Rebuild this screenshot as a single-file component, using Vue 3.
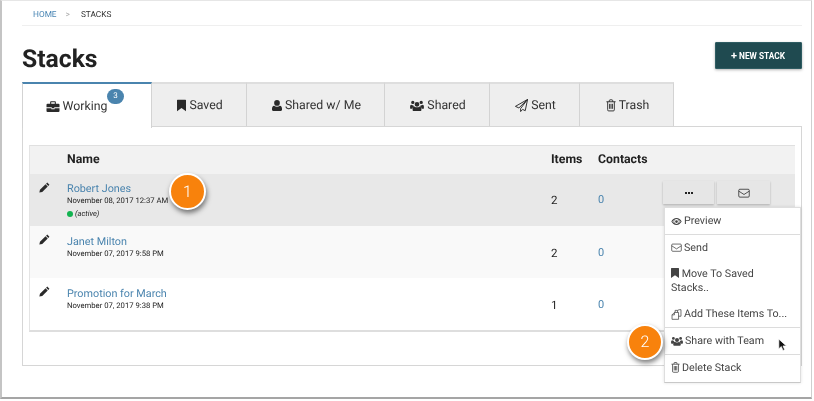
<script setup>
const tabs = [
  { label: 'Working', icon: 'briefcase', w: 130, active: true, vb: '0 0 16 16', iw: 14 },
  { label: 'Saved', icon: 'bookmark', w: 95, vb: '2.800 1.500 10.400 13.500', iw: 9 },
  { label: 'Shared w/ Me', icon: 'user', w: 138, vb: '1.500 1 13 14', iw: 10 },
  { label: 'Shared', icon: 'users', w: 105, vb: '0 1 16 14', iw: 14 },
  { label: 'Sent', icon: 'plane', w: 90, vb: '.5 .5 15 15', iw: 13 },
  { label: 'Trash', icon: 'trash', w: 94, vb: '2 1 12 15', iw: 10 },
]
const rows = [
  { name: 'Robert Jones', date: 'November 08, 2017 12:37 AM', items: 2, cls: 'r1', active: true },
  { name: 'Janet Milton', date: 'November 07, 2017 9:58 PM', items: 2, cls: 'r2' },
  { name: 'Promotion for March', date: 'November 07, 2017 9:38 PM', items: 1, cls: 'r3' },
]
const paths = {
  briefcase: 'M5.500 1.500h5a1 1 0 0 1 1 1V4.500h3.200A1.300 1.300 0 0 1 16 5.800V9H9.500v1.200h-3V9H0V5.800A1.300 1.300 0 0 1 1.300 4.500h3.200V2.500a1 1 0 0 1 1-1zM5.800 2.800v1.700h4.400V2.800zM0 10h6v1.300h4V10h6v3.500a1.300 1.300 0 0 1-1.300 1.300H1.300A1.300 1.300 0 0 1 0 13.500z',
  bookmark: 'M3.500 1.500h9a.7.7 0 0 1 .7.7V15l-5.200-3.800L2.800 15V2.200a.7.7 0 0 1 .7-.7z',
  user: 'M8 1a3.700 3.700 0 1 1 0 7.400A3.700 3.700 0 0 1 8 1zM4.300 8.300c1 .9 2.300 1.400 3.700 1.400s2.700-.5 3.700-1.400c2 .2 2.800 1.900 2.800 4v1.200c0 .9-.7 1.500-1.500 1.500H3c-.8 0-1.500-.6-1.500-1.500v-1.200c0-2.100.8-3.800 2.800-4z',
  users: 'M8 4a2.700 2.700 0 1 1 0 5.400A2.700 2.700 0 0 1 8 4zM3.200 2.600a1.900 1.900 0 1 1 0 3.800 1.900 1.900 0 0 1 0-3.800zM12.800 2.600a1.900 1.900 0 1 1 0 3.800 1.900 1.900 0 0 1 0-3.800zM5 9c.8.700 1.900 1.100 3 1.100S10.200 9.700 11 9c1.500.2 2 1.500 2 3v1c0 .7-.5 1.200-1.200 1.200H4.200C3.500 14.200 3 13.700 3 13v-1c0-1.500.5-2.800 2-3zM.1 9.500c0-1.500.5-2.500 1.500-2.500.4.400 1 .6 1.600.6h.6c0 .9.3 1.600.9 1.900-1.300.4-2 1.300-2.200 2.300H1c-.6 0-.9-.4-.9-1zM15.900 9.500c0-1.500-.5-2.500-1.500-2.500-.4.400-1 .6-1.600.6h-.6c0 .9-.3 1.600-.9 1.900 1.300.4 2 1.300 2.200 2.300H15c.6 0 .9-.4.9-1z',
  pencil: 'M12 .8l3.200 3.200-1.700 1.700-3.200-3.200zM9.500 3.300l3.200 3.200-8 8-4.200.9.900-4.200z',
}
const trashPath = 'M2.500 4h11M4 4v9.500A1.300 1.300 0 0 0 5.300 15h5.400a1.300 1.300 0 0 0 1.300-1.300V4M6 4V2.500a.8.800 0 0 1 .8-.8h2.400a.8.800 0 0 1 .8.8V4M6.300 6.500v6M8 6.500v6M9.700 6.500v6'
</script>

<template>
  <div class="window">
    <nav class="crumbs">
      <span class="crumb-home">HOME</span>
      <span class="crumb-sep">&gt;</span>
      <span class="crumb-cur">STACKS</span>
    </nav>

    <header class="head">
      <h1 class="title">Stacks</h1>
      <button class="new-btn"><span class="plus">+</span> NEW STACK</button>
    </header>

    <div class="tabs">
      <div
        v-for="t in tabs"
        :key="t.label"
        class="tab"
        :class="{ active: t.active }"
        :style="{ width: t.w + 'px' }"
      >
        <svg v-if="t.icon === 'plane'" class="ic" :viewBox="t.vb" :style="{ width: t.iw + 'px' }" fill="none" stroke="currentColor" stroke-width="1.100" stroke-linejoin="round">
          <path d="M15 1L1 9l4 1.800L15 1 7 11.500V15l2.300-2.500 3 1.500z" />
        </svg>
        <svg v-else-if="t.icon === 'trash'" class="ic" :viewBox="t.vb" :style="{ width: t.iw + 'px' }" fill="none" stroke="currentColor" stroke-width="1.100">
          <path :d="trashPath" />
        </svg>
        <svg v-else class="ic" :viewBox="t.vb" :style="{ width: t.iw + 'px' }" fill="currentColor"><path :d="paths[t.icon]" /></svg>
        <span class="tab-label">{{ t.label }}</span>
        <span v-if="t.active" class="badge">3</span>
      </div>
    </div>

    <section class="panel">
      <div class="table">
        <div class="grid thead">
          <span></span>
          <span>Name</span>
          <span>Items</span>
          <span>Contacts</span>
          <span></span>
        </div>
        <div v-for="r in rows" :key="r.name" class="grid row" :class="r.cls">
          <svg class="pencil" viewBox="0 0 16 16" fill="currentColor"><path :d="paths.pencil" /></svg>
          <div class="name-cell">
            <a class="name">{{ r.name }}</a>
            <div class="date">{{ r.date }}</div>
            <div v-if="r.active" class="status"><i class="dot"></i><em>(active)</em></div>
          </div>
          <span class="items">{{ r.items }}</span>
          <a class="contacts">0</a>
          <div v-if="r.active" class="actions">
            <button class="act act-more"><i></i><i></i><i></i></button>
            <button class="act act-mail">
              <svg class="ic-mail" viewBox="0 0 16 16" fill="none" stroke="currentColor" stroke-width="1.100"><rect x="1" y="3" width="14" height="10.500" rx="1.500" /><path d="M1 5.500l7 4.500 7-4.500" /></svg>
            </button>
          </div>
        </div>

        <div class="menu">
          <div class="mi bordered">
            <svg class="mic" viewBox="0 0 16 16" fill="currentColor"><path d="M8 3c3.300 0 6 2.200 7.500 5-1.500 2.800-4.200 5-7.500 5S2 10.800.5 8C2 5.200 4.700 3 8 3zm0 1.500A3.500 3.500 0 1 0 8 11.500 3.500 3.500 0 0 0 8 4.500zM2 8c.6.900 1.400 1.700 2.300 2.300A4.800 4.800 0 0 1 4.300 5.700C3.400 6.300 2.600 7.100 2 8zm9.700-2.300a4.800 4.800 0 0 1 0 4.600c.9-.6 1.700-1.400 2.300-2.300-.6-.9-1.400-1.700-2.300-2.300zM8 6a2 2 0 1 1 0 4 2 2 0 0 1 0-4z" /></svg>
            Preview
          </div>
          <div class="mi lift">
            <svg class="mic" viewBox="0 0 16 16" fill="none" stroke="currentColor" stroke-width="1.100"><rect x="1" y="3" width="14" height="10.500" rx="1.500" /><path d="M1 5.500l7 4.500 7-4.500" /></svg>
            Send
          </div>
          <div class="mi multi">
            <svg class="mic small" viewBox="2.800 1.500 10.400 13.500" preserveAspectRatio="none" fill="currentColor"><path :d="paths.bookmark" /></svg>
            Move To Saved Stacks..
          </div>
          <div class="mi bordered">
            <svg class="mic" viewBox="0 0 16 16" fill="none" stroke="currentColor" stroke-width="1.100" stroke-linejoin="round"><path d="M6 5V2h3.500L12 1h2.500v9.500H11M6 5h5v10H1.500V8.500L5 5zM5 5v3.500H1.500M9.500 2v3" /></svg>
            Add These Items To...
          </div>
          <div class="mi bordered">
            <svg class="mic wide" viewBox="0 0 16 16" fill="currentColor"><path :d="paths.users" /></svg>
            Share with Team
          </div>
          <div class="mi lift">
            <svg class="mic small2" viewBox="2 1 12 15" fill="none" stroke="currentColor" stroke-width="1.100"><path :d="trashPath" /></svg>
            Delete Stack
          </div>
        </div>
      </div>
    </section>

    <span class="callout c1">1</span>
    <span class="callout c2">2</span>
    <svg class="cursor" viewBox="0 0 12 16"><path d="M1 1v11.500l3-2.700 2 4.700 2-.9-2-4.500h4z" fill="#111" stroke="#fff" stroke-width=".8" /></svg>
  </div>
</template>

<style>
html, body { margin: 0; background: #fff; }
</style>

<style scoped>
.window {
  position: relative;
  box-sizing: border-box;
  width: 812px;
  height: 399px;
  padding: 0 9px 0 20px;
  background: #fff;
  border-left: 2px solid #c4c4c4;
  border-top: 1px solid #e6e6e6;
  border-right: 1px solid #cfcfcf;
  border-bottom: 2px solid #a5a5a5;
  font-family: Roboto, "Liberation Sans", sans-serif;
  color: #222;
  overflow: hidden;
  text-rendering: geometricPrecision;
  filter: blur(.3px);
}
.crumbs {
  height: 25px;
  box-sizing: border-box;
  padding: 9px 0 0 11px;
  border-bottom: 1px solid #efefef;
  font-size: 8.300px;
  line-height: 11px;
  display: flex;
}
.crumb-home { color: #4a86b4; }
.crumb-sep { color: #aaa; margin: 0 11px 0 9px; }
.crumb-cur { color: #333; }
.head {
  height: 56px;
  display: flex;
  justify-content: space-between;
  align-items: flex-start;
}
.title {
  margin: 19px 0 0;
  font-size: 24.700px;
  line-height: 30px;
  font-weight: 700;
  color: #222;
}
.new-btn {
  margin-top: 16px;
  width: 87px;
  height: 27px;
  padding: 0 1px 0 0;
  border: 1px solid #2e5c62;
  border-radius: 1px;
  background: #1f4a50;
  color: #fff;
  font-family: inherit;
  font-size: 8.300px;
  font-weight: 700;
  box-shadow: 0 1px 3px rgba(0, 0, 0, .3);
}
.plus { font-size: 11px; line-height: 8px; }
.tabs { display: flex; height: 44px; position: relative; z-index: 1; }
.tab {
  position: relative;
  box-sizing: border-box;
  height: 44px;
  background: #eee;
  border-top: 2px solid #dedede;
  border-right: 1px solid #d3d3d3;
  display: flex;
  align-items: center;
  justify-content: center;
  gap: 3px;
  font-size: 12.300px;
  color: #333;
  padding: 2px 0 0 2px;
}
.tab.active {
  background: #fff;
  border-top: 2px solid #4a84ae;
  border-left: 1px solid #d3d3d3;
  height: 46px;
  padding: 5px 21px 3px 0;
  margin-bottom: -2px;
}
.ic { height: 13px; flex: none; color: #2a2a2a; margin-top: -2px; }
.badge {
  position: absolute;
  left: 84px;
  top: 5px;
  width: 17px;
  height: 15px;
  border-radius: 8px;
  background: #4a84ae;
  color: #fff;
  font-size: 8px;
  line-height: 14px;
  text-align: center;
}
.panel {
  box-sizing: border-box;
  height: 240px;
  border: 1px solid #d6d6d6;
  padding: 18px 6px 0;
}
.table {
  position: relative;
  height: 187px;
  box-sizing: border-box;
  border-top: 1px solid #e0e0e0;
  border-left: 1px solid #e4e4e4;
  border-bottom: 2px solid #dedede;
}
.grid {
  display: grid;
  grid-template-columns: 37px 484px 47px 65px 1fr;
}
.thead {
  height: 28px;
  align-items: center;
  background: #f2f2f2;
  font-size: 12.300px;
  font-weight: 700;
  color: #222;
}
.row { height: 52px; }
.r1 { background: #e8e8e8; }
.r2 { background: #f9f9f9; }
.r3 { background: #fff; }
.pencil { width: 11px; height: 11px; margin: 8px 0 0 9px; color: #2a2a2a; }
.name-cell { padding-top: 8px; }
.r2 .name-cell, .r3 .name-cell { padding-top: 9px; }
.name {
  display: block;
  font-size: 10.800px;
  line-height: 13px;
  color: #4a84ae;
}
.date { font-size: 7.700px; line-height: 11px; color: #222; }
.status {
  display: flex;
  align-items: center;
  font-size: 7.500px;
  line-height: 11px;
  margin-top: 2px;
  color: #222;
}
.dot { width: 6px; height: 6px; border-radius: 50%; background: #12b350; margin-right: 2px; }
.items { font-size: 11.500px; line-height: 14px; padding-top: 19px; color: #222; }
.contacts { font-size: 11px; line-height: 14px; padding-top: 19px; color: #4a84ae; }
.r2 .items, .r3 .items, .r2 .contacts, .r3 .contacts { padding-top: 20px; }
.actions { display: flex; gap: 3px; padding-top: 7px; align-items: flex-start; }
.act {
  height: 23px;
  padding: 0;
  border: 0;
  background: #e6e6e6;
  box-shadow: 0 1px 2px rgba(0, 0, 0, .25);
  display: flex;
  align-items: center;
  justify-content: center;
}
.act-more { width: 51px; gap: 1px; }
.act-more i { width: 2px; height: 2px; background: #222; }
.act-mail { width: 53px; }
.ic-mail { width: 12px; height: 12px; color: #333; }
.menu {
  position: absolute;
  left: 634px;
  top: 61px;
  width: 137px;
  box-sizing: border-box;
  background: #fff;
  border: 1px solid #dedede;
  border-bottom: 1px solid #c8c8c8;
  box-shadow: 0 0 3px rgba(0, 0, 0, .12);
  font-size: 10.700px;
  color: #444;
  z-index: 2;
}
.mi {
  box-sizing: border-box;
  height: 27px;
  padding: 0 6px;
  display: flex;
  align-items: center;
  line-height: 14px;
}
.mi.lift { padding-bottom: 2px; }
.mi.bordered { border-bottom: 1px solid #dcdcdc; }
.mi.multi { display: block; height: 39px; padding-top: 5px; padding-right: 20px; }
.mic { width: 11px; height: 11px; margin-right: 2px; flex: none; color: #444; }
.mic.small { width: 8px; height: 10px; vertical-align: -1px; margin-right: 0; }
.mic.small2 { width: 9px; height: 11px; }
.mic.wide { width: 12px; height: 12px; margin-right: 2px; }
.callout {
  position: absolute;
  box-sizing: border-box;
  border: 2px solid #fff;
  border-radius: 50%;
  background: #f8820c;
  color: #fff;
  font-size: 16px;
  font-weight: 300;
  text-align: center;
  box-shadow: 1px 3px 5px rgba(0, 0, 0, .5);
  z-index: 3;
}
.c1 { left: 167px; top: 172px; width: 37px; height: 37px; line-height: 33px; }
.c2 { left: 625px; top: 323px; width: 36px; height: 36px; line-height: 32px; }
.cursor { position: absolute; left: 776px; top: 337px; width: 10px; height: 14px; z-index: 3; }
</style>
